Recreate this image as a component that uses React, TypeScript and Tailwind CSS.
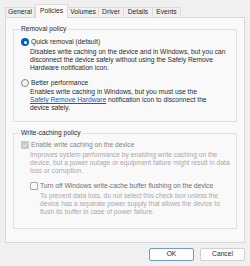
import React from "react";

const tabs = [
  { label: "General", w: "w-[30px]" },
  { label: "Policies", w: "w-[33px]", active: true },
  { label: "Volumes", w: "w-[31px]" },
  { label: "Driver", w: "w-[25px]" },
  { label: "Details", w: "w-[29px]" },
  { label: "Events", w: "w-[28px]" },
];

function Radio({ checked }: { checked?: boolean }) {
  if (checked) {
    return (
      <span className="flex h-[8px] w-[8px] shrink-0 items-center justify-center rounded-full bg-[#005fb8]">
        <span className="h-[3px] w-[3px] rounded-full bg-white" />
      </span>
    );
  }
  return <span className="h-[8px] w-[8px] shrink-0 rounded-full border border-[#8a8a8a] bg-[#f5f5f5]" />;
}

function Lines({ lines, className }: { lines: React.ReactNode[]; className: string }) {
  return (
    <div className={className}>
      {lines.map((l, i) => (
        <div key={i} className="h-[8px] whitespace-nowrap leading-[8px]">
          {l}
        </div>
      ))}
    </div>
  );
}

export default function App() {
  return (
    <div
      className="h-[266px] w-[250px] overflow-hidden bg-[#f0f0f0] text-[6.7px] text-[#2a2a2a]"
      style={{ fontFamily: '"Liberation Sans", Arial, sans-serif' }}
    >
      {/* Tabs */}
      <div className="flex items-end pl-[5px] pt-[4px]">
        {tabs.map((t) =>
          t.active ? (
            <div
              key={t.label}
              className={`${t.w} relative z-10 -mb-px flex h-[14px] items-center justify-center border border-b-0 border-[#d9d9d9] bg-[#f9f9f9] pb-[1px]`}
            >
              {t.label}
            </div>
          ) : (
            <div
              key={t.label}
              className={`${t.w} flex h-[10px] items-center justify-center border border-b-0 border-l-0 border-[#dcdcdc] bg-[#f0f0f0] first:border-l`}
            >
              {t.label}
            </div>
          )
        )}
      </div>

      {/* Panel */}
      <div className="mx-[5px] h-[226px] border border-[#d9d9d9] bg-[#f9f9f9] px-[7px] pt-[7px]">
        <fieldset className="h-[97px] border border-[#e0e0e0] px-[6px] pb-0">
          <legend className="px-[1px] leading-[8px]">Removal policy</legend>
          <div className="mt-[4px] flex h-[10px] items-center gap-[2px] pl-[1px]">
            <Radio checked />
            <span>Quick removal (default)</span>
          </div>
          <Lines
            className="ml-[10px] mt-[1px]"
            lines={[
              "Disables write caching on the device and in Windows, but you can",
              "disconnect the device safely without using the Safely Remove",
              "Hardware notification icon.",
            ]}
          />
          <div className="mt-[6px] flex h-[10px] items-center gap-[2px] pl-[1px]">
            <Radio />
            <span>Better performance</span>
          </div>
          <Lines
            className="ml-[10px]"
            lines={[
              "Enables write caching in Windows, but you must use the",
              <>
                <span className="text-[#0067c0] underline">Safely Remove Hardware</span> notification icon to disconnect the
              </>,
              "device safely.",
            ]}
          />
        </fieldset>

        <fieldset className="mt-[7px] h-[100px] border border-[#e0e0e0] px-[6px] pb-0">
          <legend className="px-[1px] leading-[8px]">Write-caching policy</legend>
          <div className="mt-[3px] flex h-[10px] items-center gap-[2px] pl-[1px] text-[#858585]">
            <span className="flex h-[8px] w-[8px] shrink-0 items-center justify-center rounded-[1px] bg-[#c8c8c8]">
              <svg viewBox="0 0 8 8" className="h-[6px] w-[6px]" fill="none" stroke="white" strokeWidth="1.2">
                <path d="M1.3 4.2 3.2 6 6.8 2" />
              </svg>
            </span>
            <span>Enable write caching on the device</span>
          </div>
          <Lines
            className="ml-[10px] mt-[1px] text-[#a8a8a8]"
            lines={[
              "Improves system performance by enabling write caching on the",
              "device, but a power outage or equipment failure might result in data",
              "loss or corruption.",
            ]}
          />
          <div className="ml-[10px] mt-[6px] flex h-[10px] items-center gap-[2px] text-[#6f6f6f]">
            <span className="h-[8px] w-[8px] shrink-0 rounded-[1px] border border-[#a8a8a8] bg-[#f9f9f9]" />
            <span>Turn off Windows write-cache buffer flushing on the device</span>
          </div>
          <Lines
            className="ml-[20px] mt-[1px] text-[#a8a8a8]"
            lines={[
              "To prevent data loss, do not select this check box unless the",
              "device has a separate power supply that allows the device to",
              "flush its buffer in case of power failure.",
            ]}
          />
        </fieldset>
      </div>

      {/* Buttons */}
      <div className="mt-[5px] flex justify-end gap-[6px] pr-[5px]">
        <button className="h-[13px] w-[45px] rounded-[2px] border border-[#7a99b8] bg-[#fdfdfd] text-[6.7px] leading-none">
          OK
        </button>
        <button className="h-[13px] w-[45px] rounded-[2px] border border-[#d0d0d0] bg-[#fdfdfd] text-[6.7px] leading-none">
          Cancel
        </button>
      </div>
    </div>
  );
}
